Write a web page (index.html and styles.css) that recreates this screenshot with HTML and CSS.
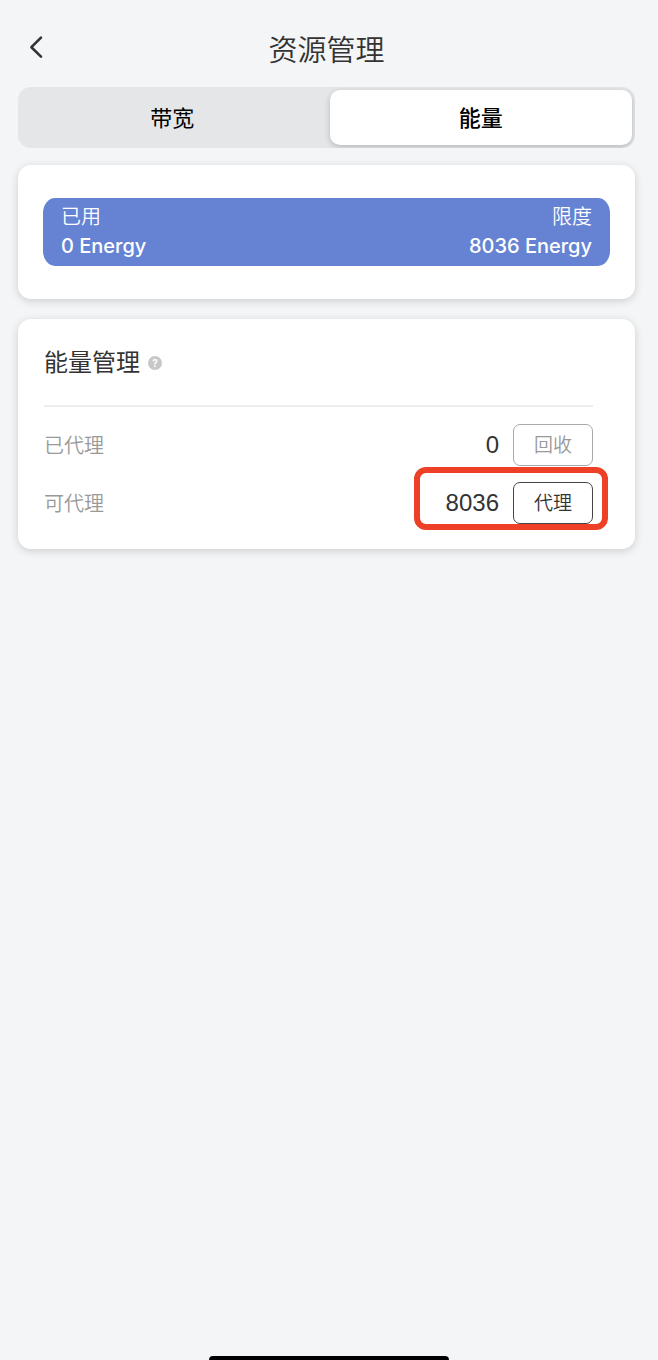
FILE: index.html
```html
<!DOCTYPE html>
<html lang="zh-CN">
<head>
<meta charset="utf-8">
<meta name="viewport" content="width=device-width, initial-scale=1">
<title>资源管理</title>
<link rel="stylesheet" href="styles.css">
</head>
<body>
<div class="screen">
  <header class="topbar">
    <button class="back" type="button" aria-label="返回">
      <svg width="16" height="24" viewBox="0 0 16 24" fill="none" stroke="#333" stroke-width="2.6" stroke-linecap="round" stroke-linejoin="round"><path d="M13 2.6 3.4 12.2l9.6 9.4"/></svg>
    </button>
    <h1 class="title">资源管理</h1>
  </header>
  <main class="content">
    <div class="tabs" role="tablist">
      <button class="tab" type="button" role="tab" aria-selected="false">带宽</button>
      <button class="tab tab-active" type="button" role="tab" aria-selected="true">能量</button>
    </div>
    <section class="card usage">
      <div class="meter">
        <div class="stat"><span class="stat-label">已用</span><span class="stat-value">0 Energy</span></div>
        <div class="stat stat-end"><span class="stat-label">限度</span><span class="stat-value">8036 Energy</span></div>
      </div>
    </section>
    <section class="card manage">
      <div class="manage-head">
        <h2 class="subtitle">能量管理</h2>
        <button class="help" type="button" aria-label="帮助">?</button>
      </div>
      <div class="row">
        <span class="row-label">已代理</span>
        <span class="amount">0</span>
        <button class="action action-muted" type="button">回收</button>
      </div>
      <div class="row">
        <span class="row-label">可代理</span>
        <span class="amount">8036</span>
        <button class="action" type="button">代理</button>
        <span class="highlight"></span>
      </div>
    </section>
  </main>
  <div class="home-bar"></div>
</div>
</body>
</html>
```
FILE: styles.css
```css
* { box-sizing: border-box; }
body {
  margin: 0;
  background: #f4f5f7;
  color: #333;
  font-family: Inter, "Noto Sans CJK SC", sans-serif;
}
button {
  margin: 0;
  padding: 0;
  border: 0;
  background: none;
  color: inherit;
  font: inherit;
}
.screen {
  display: flex;
  flex-direction: column;
  min-height: 100vh;
}
.topbar {
  display: grid;
  grid-template-columns: 40px 1fr 40px;
  align-items: center;
  padding: 30px 23px 16px 18px;
}
.back {
  display: flex;
  padding: 0 10px;
  margin-bottom: 7px;
}
.title {
  margin: 0;
  text-align: center;
  font-size: 29px;
  line-height: 41px;
  font-weight: 350;
}
.content {
  display: flex;
  flex-direction: column;
  padding: 0 23px 0 18px;
}
.tabs {
  display: grid;
  grid-template-columns: 1fr 1fr;
  gap: 6px;
  padding: 3px;
  margin-bottom: 17px;
  border-radius: 13px;
  background: #e5e6e8;
  overflow: hidden;
}
.tab {
  height: 55px;
  padding-bottom: 4px;
  border-radius: 10px;
  color: #000;
  font-size: 22px;
  font-weight: 400;
}
.tab-active {
  background: #fff;
  box-shadow: 0 2px 6px rgba(0, 0, 0, 0.2);
  font-weight: 500;
}
.card {
  border-radius: 13px;
  background: #fff;
  box-shadow: 0 2px 8px rgba(0, 0, 0, 0.16);
}
.usage {
  padding: 33px 25px;
  margin-bottom: 20px;
}
.meter {
  display: flex;
  justify-content: space-between;
  padding: 5px 18px;
  border-radius: 12px / 15px;
  background: #6683d3;
  color: #fff;
  font-size: 20px;
}
.stat {
  display: flex;
  flex-direction: column;
  line-height: 29px;
}
.stat-end { text-align: right; }
.stat-label { font-weight: 350; }
.stat-value { font-weight: 500; }
.manage {
  padding: 24px 42px 25px 26px;
}
.manage-head {
  display: flex;
  align-items: center;
  gap: 8px;
  padding-bottom: 22px;
  margin-bottom: 17px;
  border-bottom: 2px solid #eee;
}
.subtitle {
  margin: 0;
  font-size: 24px;
  line-height: 40px;
  font-weight: 400;
}
.help {
  width: 14px;
  height: 14px;
  border-radius: 50%;
  background: #c8c8c8;
  color: #fff;
  font-size: 10px;
  line-height: 14px;
  font-weight: 700;
}
.row {
  position: relative;
  display: flex;
  align-items: center;
  gap: 14px;
}
.row + .row { margin-top: 16px; }
.row-label {
  flex: 1;
  padding-bottom: 2px;
  color: #999;
  font-size: 20px;
  font-weight: 350;
}
.amount {
  font-family: "Liberation Sans", sans-serif;
  font-size: 24px;
}
.action {
  width: 80px;
  height: 42px;
  padding-bottom: 4px;
  border: 1px solid #444;
  border-radius: 7px;
  font-size: 19px;
  font-weight: 350;
}
.action-muted {
  border-color: #aaa;
  color: #999;
}
.highlight {
  position: absolute;
  top: -15px;
  right: -15px;
  bottom: -6px;
  width: 194px;
  border: 6px solid #ee4026;
  border-radius: 12px;
  pointer-events: none;
}
.home-bar {
  width: 240px;
  height: 4px;
  margin: auto auto 0;
  border-radius: 4px 4px 0 0;
  background: #000;
}
```
